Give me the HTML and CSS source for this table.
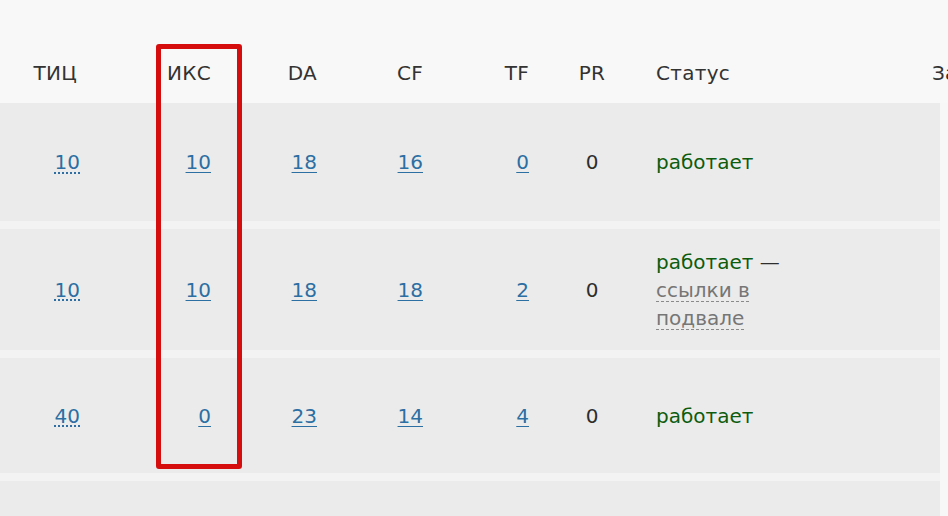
FILE: index.html
```html
<!DOCTYPE html>
<html lang="ru">
<head>
<meta charset="utf-8">
<link rel="stylesheet" href="styles.css">
</head>
<body>
<div class="page">
  <div class="row head">
    <div class="c c1 hc1">ТИЦ</div>
    <div class="c c2">ИКС</div>
    <div class="c c3">DA</div>
    <div class="c c4">CF</div>
    <div class="c c5">TF</div>
    <div class="c c6">PR</div>
    <div class="c c7">Статус</div>
    <div class="c c8">Задания</div>
  </div>
  <div class="body">
    <div class="row data r1">
      <div class="c c1"><span class="tic">10</span></div>
      <div class="c c2"><a class="lnk">10</a></div>
      <div class="c c3"><a class="lnk">18</a></div>
      <div class="c c4"><a class="lnk">16</a></div>
      <div class="c c5"><a class="lnk">0</a></div>
      <div class="c c6">0</div>
      <div class="c c7"><span class="ok">работает</span></div>
      <div class="c c8"></div>
    </div>
    <div class="row data r2">
      <div class="c c1"><span class="tic">10</span></div>
      <div class="c c2"><a class="lnk">10</a></div>
      <div class="c c3"><a class="lnk">18</a></div>
      <div class="c c4"><a class="lnk">18</a></div>
      <div class="c c5"><a class="lnk">2</a></div>
      <div class="c c6">0</div>
      <div class="c c7"><span class="ok">работает</span> — <span class="note">ссылки в подвале</span></div>
      <div class="c c8"></div>
    </div>
    <div class="row data r3">
      <div class="c c1"><span class="tic">40</span></div>
      <div class="c c2"><a class="lnk">0</a></div>
      <div class="c c3"><a class="lnk">23</a></div>
      <div class="c c4"><a class="lnk">14</a></div>
      <div class="c c5"><a class="lnk">4</a></div>
      <div class="c c6">0</div>
      <div class="c c7"><span class="ok">работает</span></div>
      <div class="c c8"></div>
    </div>
    <div class="row data r4"></div>
  </div>
  <div class="highlight"></div>
</div>
</body>
</html>
```

FILE: styles.css
```css
html, body {
  margin: 0;
  padding: 0;
  background: #f7f7f7;
  overflow: hidden;
}
body {
  width: 948px;
  height: 516px;
  font-family: "DejaVu Sans", Verdana, sans-serif;
  font-size: 20px;
  line-height: 28px;
  color: #2e2e2e;
}
.page {
  position: relative;
  width: 948px;
  height: 516px;
}
.row {
  display: grid;
  grid-template-columns: 100px 131px 106px 106px 106px 86px 277px 100px;
  align-items: center;
  width: 1012px;
}
.head {
  height: 103px;
  align-items: start;
  padding-top: 59px;
  box-sizing: border-box;
  background: #f8f8f8;
  color: #333;
  letter-spacing: 0.3px;
}
.body {
  display: flex;
  flex-direction: column;
  gap: 8px;
  background: #f3f3f3;
  width: 940px;
  overflow: hidden;
}
.data {
  background: #ebebeb;
}
.r1 { height: 118px; }
.r2 { height: 121px; }
.r3 { height: 115px; }
.r4 { height: 40px; }
.c {
  box-sizing: border-box;
}
.c1, .c2, .c3, .c4, .c5 {
  text-align: right;
  padding-right: 20px;
}
.hc1 { padding-right: 23px; }
.c6 {
  text-align: center;
}
.c7 {
  padding-left: 21px;
  padding-right: 115px;
}
.c8 {
  padding-left: 20px;
}
.lnk {
  color: #2b6fa3;
  text-decoration: underline;
  text-underline-offset: 3px;
  text-decoration-thickness: 1px;
}
.tic {
  color: #2b6fa3;
  text-decoration: underline dotted;
  text-underline-offset: 3px;
  text-decoration-thickness: 1.5px;
}
.ok {
  color: #0d5c0d;
}
.note {
  color: #767676;
  text-decoration: underline dashed #8a8a8a;
  text-underline-offset: 4px;
  text-decoration-thickness: 1px;
}
.highlight {
  position: absolute;
  left: 156px;
  top: 44px;
  width: 86px;
  height: 425px;
  box-sizing: border-box;
  border: 5px solid #d50d0d;
  border-radius: 3px;
}
```
